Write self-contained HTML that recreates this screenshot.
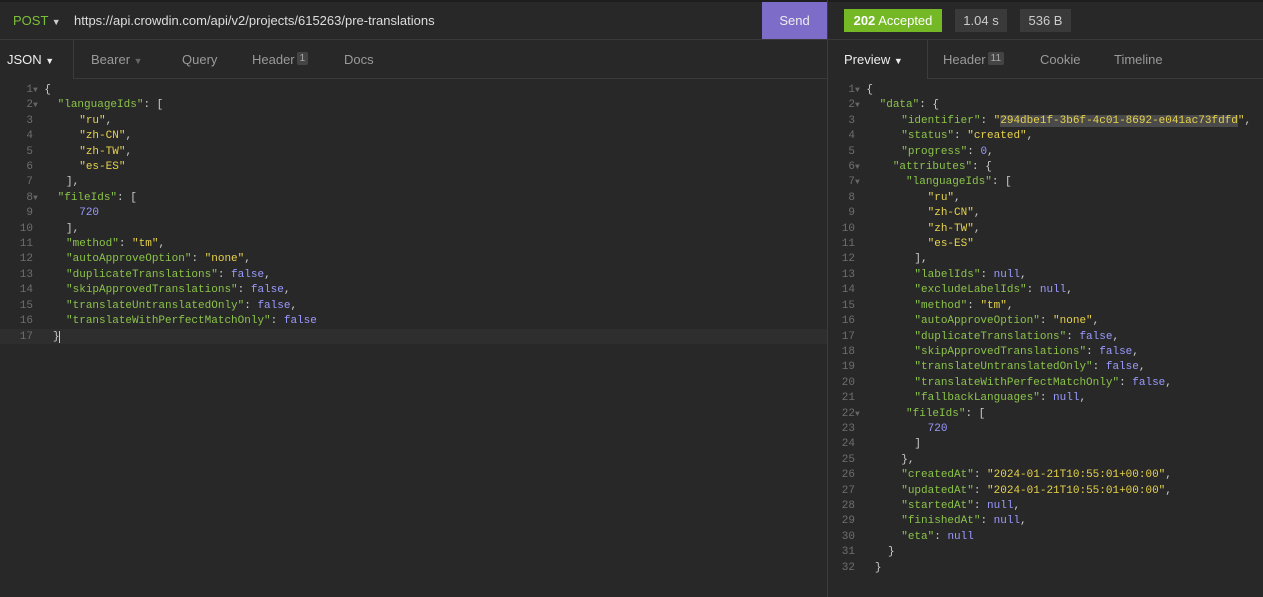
<!DOCTYPE html>
<html><head><meta charset="utf-8"><style>
*{margin:0;padding:0;box-sizing:border-box}
body{width:1263px;height:597px;background:#282828;overflow:hidden;font-family:"Liberation Sans",sans-serif;color:#ddd;position:relative}
.a{position:absolute;white-space:pre}
.hl{background:#2b2b2b}
.code{font-family:"Liberation Mono",monospace;font-size:11px;line-height:15.4px}
.ln{color:#6e6e6e;text-align:right;width:24px;display:inline-block}
.k{color:#8bc34a}.s{color:#e6d24c}.n{color:#9a9aff}.p{color:#ccc}
.ar{color:#666;font-size:8px}
.tab{position:absolute;font-size:13px;color:#9a9a9a;top:52px}
.badge{display:inline-block;background:#444;color:#aaa;font-size:10px;padding:0 3px;vertical-align:top;margin-left:2px;border-radius:2px;line-height:13px}
</style></head><body>
<div class="a" style="left:0;top:0;width:1263px;height:2px;background:#1e1e1e"></div>
<div class="a" style="left:0;top:39px;width:1263px;height:1px;background:#3a3a3a"></div>
<div class="a" style="left:0;top:78px;width:1263px;height:1px;background:#3a3a3a"></div>
<div class="a" style="left:827px;top:0;width:1px;height:597px;background:#3c3c3c"></div>
<div class="a" style="left:73px;top:40px;width:1px;height:39px;background:#3c3c3c"></div>
<div class="a" style="left:0;top:78px;width:73px;height:1px;background:#282828"></div>
<div class="a" style="left:927px;top:40px;width:1px;height:39px;background:#3c3c3c"></div>
<div class="a" style="left:828px;top:78px;width:99px;height:1px;background:#282828"></div>

<div class="a" style="left:13px;top:13px;font-size:13px;color:#7cc03a">POST <span style="color:#ccc;font-size:9px">▼</span></div>
<div class="a" style="left:74px;top:13px;font-size:13px;color:#ddd">https://api.crowdin.com/api/v2/projects/615263/pre-translations</div>
<div class="a" style="left:762px;top:2px;width:65px;height:37px;background:#7e6cc9;color:#eee;font-size:13px;text-align:center;line-height:37px">Send</div>
<div class="a" style="left:844px;top:9px;width:98px;height:23px;background:#74b925;color:#fff;font-size:13px;text-align:center;line-height:23px"><b>202</b> Accepted</div>
<div class="a" style="left:955px;top:9px;width:52px;height:23px;background:#3a3a3a;color:#ccc;font-size:13px;text-align:center;line-height:23px">1.04 s</div>
<div class="a" style="left:1020px;top:9px;width:51px;height:23px;background:#3a3a3a;color:#ccc;font-size:13px;text-align:center;line-height:23px">536 B</div>

<div class="tab" style="left:7px;color:#eee">JSON <span style="font-size:9px">▼</span></div>
<div class="tab" style="left:91px">Bearer <span style="font-size:9px;color:#666">▼</span></div>
<div class="tab" style="left:182px">Query</div>
<div class="tab" style="left:252px">Header<span class="badge">1</span></div>
<div class="tab" style="left:344px">Docs</div>
<div class="tab" style="left:844px;color:#eee">Preview <span style="font-size:9px">▼</span></div>
<div class="tab" style="left:943px">Header<span class="badge">11</span></div>
<div class="tab" style="left:1040px">Cookie</div>
<div class="tab" style="left:1114px">Timeline</div>

<div class="a hl" style="left:0;top:329px;width:827px;height:15px;background:#2e2e2e"></div>

<div class="a code" style="left:9px;top:83px"><span class="ln">1</span><span class="ar">▼</span> <span class="p">{</span>
<span class="ln">2</span><span class="ar">▼</span>   <span class="k">"languageIds"</span><span class="p">: [</span>
<span class="ln">3</span>       <span class="s">"ru"</span><span class="p">,</span>
<span class="ln">4</span>       <span class="s">"zh-CN"</span><span class="p">,</span>
<span class="ln">5</span>       <span class="s">"zh-TW"</span><span class="p">,</span>
<span class="ln">6</span>       <span class="s">"es-ES"</span>
<span class="ln">7</span>     <span class="p">],</span>
<span class="ln">8</span><span class="ar">▼</span>   <span class="k">"fileIds"</span><span class="p">: [</span>
<span class="ln">9</span>       <span class="n">720</span>
<span class="ln">10</span>     <span class="p">],</span>
<span class="ln">11</span>     <span class="k">"method"</span><span class="p">: </span><span class="s">"tm"</span><span class="p">,</span>
<span class="ln">12</span>     <span class="k">"autoApproveOption"</span><span class="p">: </span><span class="s">"none"</span><span class="p">,</span>
<span class="ln">13</span>     <span class="k">"duplicateTranslations"</span><span class="p">: </span><span class="n">false</span><span class="p">,</span>
<span class="ln">14</span>     <span class="k">"skipApprovedTranslations"</span><span class="p">: </span><span class="n">false</span><span class="p">,</span>
<span class="ln">15</span>     <span class="k">"translateUntranslatedOnly"</span><span class="p">: </span><span class="n">false</span><span class="p">,</span>
<span class="ln">16</span>     <span class="k">"translateWithPerfectMatchOnly"</span><span class="p">: </span><span class="n">false</span>
<span class="ln">17</span>   <span class="p" style="border-right:1px solid #e6d24c">}</span></div>

<div class="a code" style="left:831px;top:83px"><span class="ln">1</span><span class="ar">▼</span> <span class="p">{</span>
<span class="ln">2</span><span class="ar">▼</span>   <span class="k">"data"</span><span class="p">: {</span>
<span class="ln">3</span>       <span class="k">"identifier"</span><span class="p">: </span><span class="s">"<span style="background:#4a4a4a">294dbe1f-3b6f-4c01-8692-e041ac73fdfd</span>"</span><span class="p">,</span>
<span class="ln">4</span>       <span class="k">"status"</span><span class="p">: </span><span class="s">"created"</span><span class="p">,</span>
<span class="ln">5</span>       <span class="k">"progress"</span><span class="p">: </span><span class="n">0</span><span class="p">,</span>
<span class="ln">6</span><span class="ar">▼</span>     <span class="k">"attributes"</span><span class="p">: {</span>
<span class="ln">7</span><span class="ar">▼</span>       <span class="k">"languageIds"</span><span class="p">: [</span>
<span class="ln">8</span>           <span class="s">"ru"</span><span class="p">,</span>
<span class="ln">9</span>           <span class="s">"zh-CN"</span><span class="p">,</span>
<span class="ln">10</span>           <span class="s">"zh-TW"</span><span class="p">,</span>
<span class="ln">11</span>           <span class="s">"es-ES"</span>
<span class="ln">12</span>         <span class="p">],</span>
<span class="ln">13</span>         <span class="k">"labelIds"</span><span class="p">: </span><span class="n">null</span><span class="p">,</span>
<span class="ln">14</span>         <span class="k">"excludeLabelIds"</span><span class="p">: </span><span class="n">null</span><span class="p">,</span>
<span class="ln">15</span>         <span class="k">"method"</span><span class="p">: </span><span class="s">"tm"</span><span class="p">,</span>
<span class="ln">16</span>         <span class="k">"autoApproveOption"</span><span class="p">: </span><span class="s">"none"</span><span class="p">,</span>
<span class="ln">17</span>         <span class="k">"duplicateTranslations"</span><span class="p">: </span><span class="n">false</span><span class="p">,</span>
<span class="ln">18</span>         <span class="k">"skipApprovedTranslations"</span><span class="p">: </span><span class="n">false</span><span class="p">,</span>
<span class="ln">19</span>         <span class="k">"translateUntranslatedOnly"</span><span class="p">: </span><span class="n">false</span><span class="p">,</span>
<span class="ln">20</span>         <span class="k">"translateWithPerfectMatchOnly"</span><span class="p">: </span><span class="n">false</span><span class="p">,</span>
<span class="ln">21</span>         <span class="k">"fallbackLanguages"</span><span class="p">: </span><span class="n">null</span><span class="p">,</span>
<span class="ln">22</span><span class="ar">▼</span>       <span class="k">"fileIds"</span><span class="p">: [</span>
<span class="ln">23</span>           <span class="n">720</span>
<span class="ln">24</span>         <span class="p">]</span>
<span class="ln">25</span>       <span class="p">},</span>
<span class="ln">26</span>       <span class="k">"createdAt"</span><span class="p">: </span><span class="s">"2024-01-21T10:55:01+00:00"</span><span class="p">,</span>
<span class="ln">27</span>       <span class="k">"updatedAt"</span><span class="p">: </span><span class="s">"2024-01-21T10:55:01+00:00"</span><span class="p">,</span>
<span class="ln">28</span>       <span class="k">"startedAt"</span><span class="p">: </span><span class="n">null</span><span class="p">,</span>
<span class="ln">29</span>       <span class="k">"finishedAt"</span><span class="p">: </span><span class="n">null</span><span class="p">,</span>
<span class="ln">30</span>       <span class="k">"eta"</span><span class="p">: </span><span class="n">null</span>
<span class="ln">31</span>     <span class="p">}</span>
<span class="ln">32</span>   <span class="p">}</span></div>
</body></html>
